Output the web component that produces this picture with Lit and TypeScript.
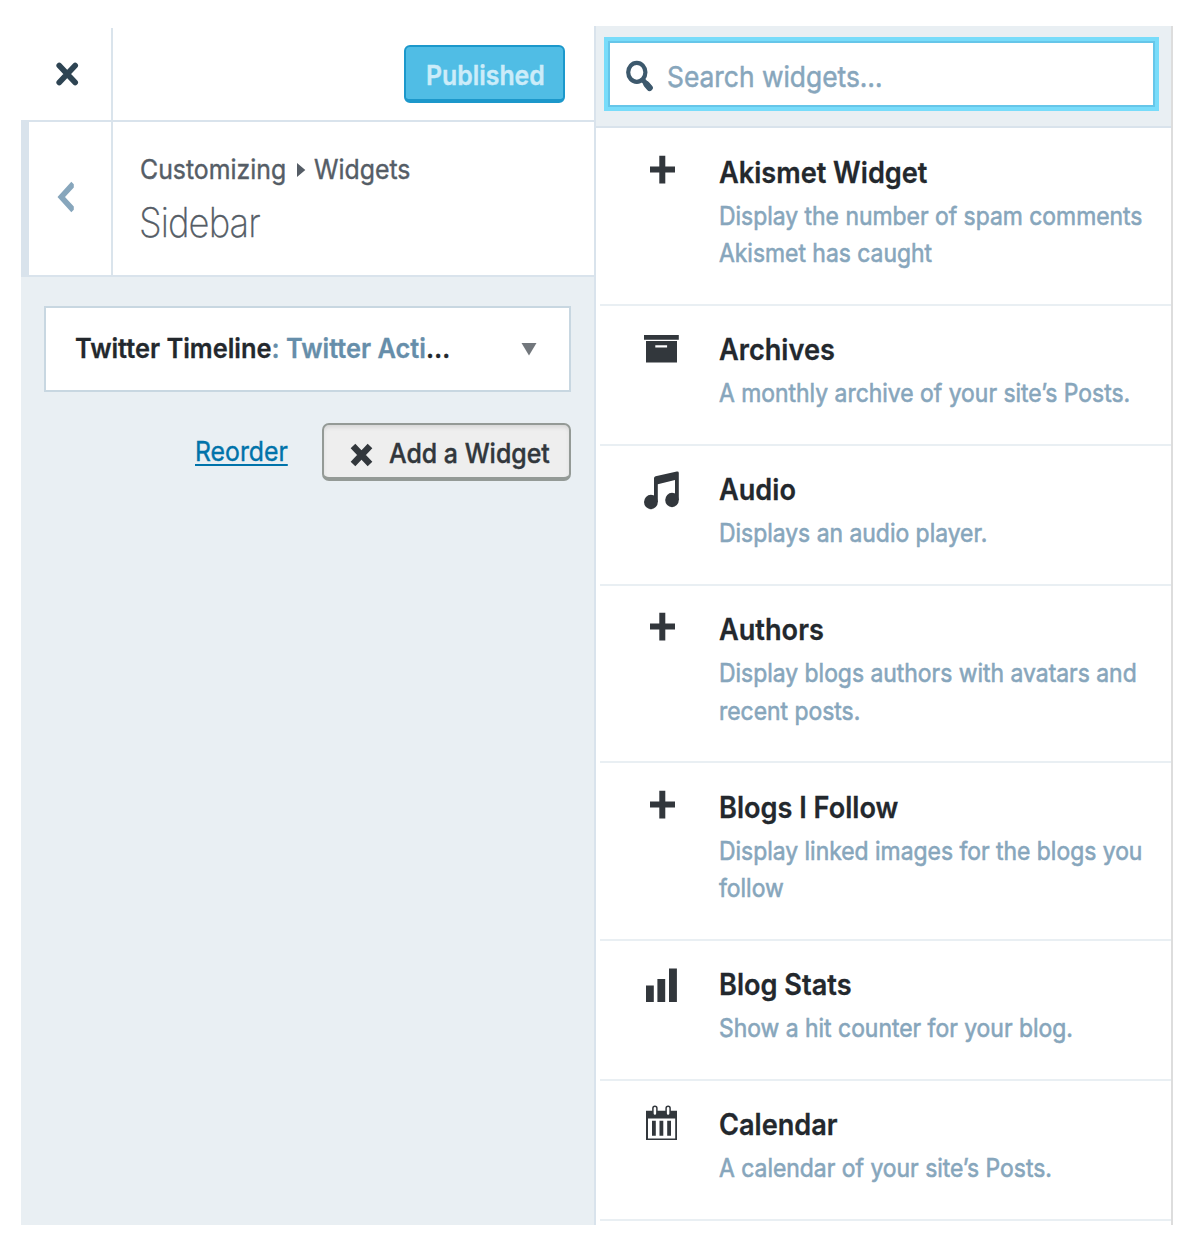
import { LitElement, html, css, svg, SVGTemplateResult } from "lit";
import { customElement, property } from "lit/decorators.js";

type IconName = "plus" | "archive" | "audio" | "stats" | "calendar";

interface Widget {
  icon: IconName;
  title: string;
  description: string;
}

const WIDGETS: Widget[] = [
  { icon: "plus", title: "Akismet Widget", description: "Display the number of spam comments Akismet has caught" },
  { icon: "archive", title: "Archives", description: "A monthly archive of your site’s Posts." },
  { icon: "audio", title: "Audio", description: "Displays an audio player." },
  { icon: "plus", title: "Authors", description: "Display blogs authors with avatars and recent posts." },
  { icon: "plus", title: "Blogs I Follow", description: "Display linked images for the blogs you follow" },
  { icon: "stats", title: "Blog Stats", description: "Show a hit counter for your blog." },
  { icon: "calendar", title: "Calendar", description: "A calendar of your site’s Posts." },
];

const ICONS: Record<IconName, SVGTemplateResult> = {
  plus: svg`<path d="M15.3 4.8h6V15.5H31v6h-9.7v11h-6v-11H6v-6h9.3z"/>`,
  archive: svg`<path fill-rule="evenodd" d="M0 7.1h34.8v4.7H0zM2 13h31v21.4H2zM11.3 17.2h11.8v2.4H11.3z"/>`,
  audio: svg`<path d="M10 10.2Q10 8.6 11.6 8.2L32.8 3.6Q34.8 3.2 34.8 5V32H31V12L13.8 16.2V34H10z"/><ellipse cx="6.9" cy="34" rx="6.9" ry="7.2"/><ellipse cx="28" cy="32" rx="6.8" ry="7.2"/>`,
  stats: svg`<path d="M2 22.4h7.8v16.6H2zM13.4 16h7.8v23h-7.8zM25 5.4h7.9v33.6H25z"/>`,
  calendar: svg`<path fill-rule="evenodd" d="M2 7.7h31v29.4H2zM4 15.6v19.8h27.2V15.6z"/><path d="M8 17.8h3.8v15H8zM15.5 17.8h3.8v15h-3.8zM23.2 17.8H27v15h-3.8z"/><rect x="8.9" y="3.3" width="4" height="9.2" rx="2" fill="#fff" stroke="#32373c" stroke-width="1.5"/><rect x="22.1" y="3.3" width="4" height="9.2" rx="2" fill="#fff" stroke="#32373c" stroke-width="1.5"/>`,
};

@customElement("widget-row")
class WidgetRow extends LitElement {
  @property({ attribute: false }) widget!: Widget;

  static styles = css`
    :host {
      display: flex;
      box-sizing: border-box;
      margin-left: 4px;
      padding: 22.3px 0 32.2px 44px;
      border-bottom: 2px solid #e9eff3;
    }
    .icon {
      flex: none;
      width: 36px;
      height: 44px;
      margin-right: 39px;
      fill: #32373c;
    }
    .body {
      flex: none;
      width: 436px;
    }
    .title,
    .description {
      margin: 0;
      transform-origin: 0 0;
    }
    .title {
      height: 43px;
      margin-bottom: 3px;
      font-size: 29.5px;
      line-height: 42.6px;
      font-weight: 600;
      color: #23282d;
      -webkit-text-stroke: 0.3px #23282d;
      transform: scaleX(0.92);
      white-space: nowrap;
    }
    .description {
      width: 486px;
      font-size: 25.5px;
      line-height: 37.5px;
      color: #87a6bc;
      -webkit-text-stroke: 0.6px #87a6bc;
      transform: scaleX(0.898);
    }
  `;

  render() {
    return html`
      <svg class="icon" viewBox="0 0 36 44">${ICONS[this.widget.icon]}</svg>
      <div class="body">
        <h3 class="title">${this.widget.title}</h3>
        <p class="description">${this.widget.description}</p>
      </div>
    `;
  }
}

@customElement("app-root")
class AppRoot extends LitElement {
  static styles = css`
    :host {
      display: block;
      font-family: Inter, "Liberation Sans", sans-serif;
      background: #fff;
    }
    * {
      box-sizing: border-box;
    }
    .page {
      display: flex;
      width: 1202px;
      height: 1260px;
      padding: 26px 0 35px 21px;
    }
    .controls {
      display: flex;
      flex-direction: column;
      width: 575px;
      background: #e9eff3;
      border-right: 2px solid #d9e3ec;
    }
    .topbar {
      display: flex;
      height: 96px;
      background: #fff;
      border-bottom: 2px solid #d9e3ec;
    }
    .close {
      flex: none;
      width: 92px;
      margin-top: 2px;
      padding: 33px 0 0 34px;
      border-right: 2px solid #dae4ec;
    }
    .close svg,
    .back svg,
    .reorder svg,
    .search svg {
      display: block;
    }
    .t {
      display: block;
      width: max-content;
      white-space: nowrap;
      transform-origin: 0 0;
    }
    .published {
      width: 161px;
      height: 58px;
      margin: 19px 0 0 291px;
      padding: 0 0 0 19.7px;
      border: 2px solid #1c98cb;
      border-bottom-width: 4px;
      border-radius: 6px;
      background: #50bde5;
      font: 600 27px/57px Inter, sans-serif;
      color: #ccecf9;
      -webkit-text-stroke: 0.4px #ccecf9;
      text-align: left;
    }
    .published .t {
      transform: scaleX(0.92);
    }
    .heading {
      display: flex;
      height: 155px;
      background: #fff;
      border-left: 8px solid #d9e3ec;
      border-bottom: 2px solid #d9e3ec;
    }
    .back {
      flex: none;
      width: 84px;
      padding: 59px 0 0 28px;
      border-right: 2px solid #dae4ec;
    }
    .crumbs {
      padding: 28.5px 0 0 27px;
      color: #555d66;
    }
    .trail {
      display: flex;
      align-items: center;
      height: 38px;
      font-size: 27px;
      line-height: 38px;
      -webkit-text-stroke: 0.4px #555d66;
    }
    .trail .t {
      transform: scaleX(0.92);
    }
    .crumb-a {
      width: 157px;
    }
    .crumb-b {
      width: 16.5px;
    }
    .crumb-b svg {
      display: block;
    }
    .section .t {
      margin-left: -1px;
      font-size: 40.5px;
      line-height: 68px;
      font-weight: 200;
      letter-spacing: -1px;
      -webkit-text-stroke: 0.3px #555d66;
      transform: scaleX(0.898);
    }
    .content {
      padding: 29px 23px 0;
    }
    .placed {
      display: flex;
      align-items: center;
      width: 527px;
      height: 86px;
      padding-left: 29px;
      background: #fff;
      border: 2px solid #c8d7e1;
      font-size: 27px;
      font-weight: 600;
      color: #23282d;
    }
    .placed-name {
      width: 446px;
      padding-bottom: 2px;
    }
    .placed .t {
      -webkit-text-stroke: 0.3px;
      transform: scaleX(0.94);
    }
    .placed em {
      font-style: normal;
      color: #668eaa;
    }
    .reorder {
      display: flex;
      margin-top: 31px;
    }
    .link {
      width: 127px;
      margin-left: 151px;
      font-size: 27px;
      line-height: 57px;
      color: #0073aa;
    }
    .link .t {
      text-decoration: underline;
      text-decoration-thickness: 2px;
      text-underline-offset: 3px;
      -webkit-text-stroke: 0.4px #0073aa;
      transform: scaleX(0.918);
    }
    .add {
      display: flex;
      width: 249px;
      height: 58px;
      padding: 0 0 0 26px;
      border: 2px solid #949a96;
      border-bottom-width: 4px;
      border-radius: 7px;
      background: #eee;
      box-shadow: inset 0 3px 4px -1px #d4d4d4;
      font: 500 27px/57px Inter, sans-serif;
      color: #32373c;
      -webkit-text-stroke: 0.4px #32373c;
      text-align: left;
    }
    .add svg {
      flex: none;
      margin: 18px 15.5px 0 0;
    }
    .add .t {
      transform: scaleX(0.922);
    }
    .available {
      width: 577px;
      background: #fff;
      border-right: 2px solid #ddd;
      overflow: hidden;
    }
    .searchbar {
      height: 102px;
      margin-bottom: 0.4px;
      padding: 11px 12px 0 8px;
      background: #e9eff3;
      border-bottom: 2px solid #d9e3ec;
    }
    .search {
      display: flex;
      height: 74px;
      padding: 16px 0 0 16px;
      background: #fff;
      border: 4px solid #78dcfa;
      box-shadow: inset 0 0 0 2px #66c6e9;
    }
    .search .t {
      margin-left: 13px;
      font-size: 28.5px;
      line-height: 39px;
      color: #87a6bc;
      -webkit-text-stroke: 0.5px #87a6bc;
      transform: scaleX(0.925);
    }
  `;

  render() {
    return html`
      <main class="page">
        <section class="controls">
          <header class="topbar">
            <div class="close">
              <svg width="24" height="26" viewBox="0 0 24 26">
                <path d="M4.2 4.5 20.2 21.5M20.2 4.5 4.2 21.5" stroke="#2e4453" stroke-width="5.6" stroke-linecap="round" />
              </svg>
            </div>
            <button class="published"><span class="t">Published</span></button>
          </header>
          <div class="heading">
            <div class="back">
              <svg width="18" height="32" viewBox="0 0 18 32">
                <path d="M14.3.8 16.8 3.2V6.4L8 16l8.8 9.6v3.2l-2.5 2.4L.5 16z" fill="#87a6bc" />
              </svg>
            </div>
            <div class="crumbs">
              <div class="trail">
                <span class="crumb-a"><span class="t">Customizing</span></span>
                <span class="crumb-b">
                  <svg width="9" height="16" viewBox="0 0 9 16"><path d="M0 1v14l8.3-7z" fill="#555d66" /></svg>
                </span>
                <span class="t">Widgets</span>
              </div>
              <div class="section"><span class="t">Sidebar</span></div>
            </div>
          </div>
          <div class="content">
            <div class="placed">
              <div class="placed-name"><span class="t">Twitter Timeline<em>: Twitter Acti</em>…</span></div>
              <svg width="16" height="14" viewBox="0 0 16 14"><path d="M.5 1h15L8 13.5z" fill="#72777c" /></svg>
            </div>
            <div class="reorder">
              <div class="link"><span class="t">Reorder</span></div>
              <button class="add">
                <svg width="23" height="24" viewBox="0 0 23 24">
                  <path d="M3 3 20 21M20 3 3 21" stroke="#32373c" stroke-width="6.4" />
                </svg>
                <span class="t">Add a Widget</span>
              </button>
            </div>
          </div>
        </section>
        <section class="available">
          <div class="searchbar">
            <div class="search">
              <svg width="30" height="36" viewBox="0 0 30 36">
                <ellipse cx="12.8" cy="15.3" rx="8.6" ry="9.5" fill="none" stroke="#3d596d" stroke-width="4.2" />
                <path d="M19 23.2 26 31" stroke="#3d596d" stroke-width="5" stroke-linecap="round" />
                <path d="M22.6 27.4 25.6 30.8" stroke="#3d596d" stroke-width="6.4" stroke-linecap="round" />
              </svg>
              <span class="t">Search widgets…</span>
            </div>
          </div>
          ${WIDGETS.map((w) => html`<widget-row .widget=${w}></widget-row>`)}
        </section>
      </main>
    `;
  }
}
